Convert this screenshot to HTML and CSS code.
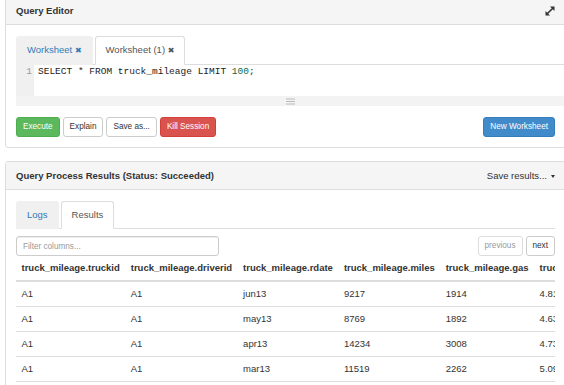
FILE: index.html
```html
<!DOCTYPE html>
<html lang="en">
<head>
    <meta charset="UTF-8">
    <meta name="viewport" content="width=device-width, initial-scale=1.0">
    <title>Query Editor</title>
    <link rel="stylesheet" href="styles.css">
</head>
<body>
    <div class="page">
        <!-- Query editor panel -->
        <div class="panel editor-panel">
            <div class="panel-heading">
                <span class="panel-title">Query Editor</span>
                <svg class="expand" width="10" height="10" viewBox="0 0 10 10">
                    <line x1="2.2" y1="7.8" x2="7.8" y2="2.2" stroke="#333" stroke-width="1.6"/>
                    <polygon points="5,0.5 9.5,0.5 9.5,5" fill="#333"/>
                    <polygon points="0.5,5 0.5,9.5 5,9.5" fill="#333"/>
                </svg>
            </div>
            <div class="panel-body">
                <ul class="nav-tabs wide">
                    <li class="tab"><a>Worksheet <span class="close">✖</span></a></li>
                    <li class="tab active"><a>Worksheet (1) <span class="close">✖</span></a></li>
                </ul>
                <div class="editor wide">
                    <div class="code-area">
                        <div class="gutter">1</div>
                        <div class="code">SELECT * FROM truck_mileage LIMIT <span class="num">100</span>;</div>
                    </div>
                    <div class="resize-bar">
                        <svg width="9" height="7" viewBox="0 0 9 7">
                            <rect x="0" y="0.5" width="9" height="1" fill="#bbb"/>
                            <rect x="0" y="3" width="9" height="1" fill="#bbb"/>
                            <rect x="0" y="5.5" width="9" height="1" fill="#bbb"/>
                        </svg>
                    </div>
                </div>
                <div class="actions">
                    <div class="btn-row">
                        <button class="btn btn-success">Execute</button>
                        <button class="btn">Explain</button>
                        <button class="btn">Save as...</button>
                        <button class="btn btn-danger">Kill Session</button>
                    </div>
                    <button class="btn btn-primary">New Worksheet</button>
                </div>
            </div>
        </div>

        <!-- Results panel -->
        <div class="panel results-panel">
            <div class="panel-heading">
                <span class="panel-title">Query Process Results (Status: Succeeded)</span>
                <span class="save-results">Save results... <span class="caret"></span></span>
            </div>
            <div class="panel-body">
                <ul class="nav-tabs">
                    <li class="tab"><a>Logs</a></li>
                    <li class="tab active"><a>Results</a></li>
                </ul>
                <div class="toolbar">
                    <input class="filter" type="text" placeholder="Filter columns...">
                    <div class="pager">
                        <button class="btn" disabled>previous</button>
                        <button class="btn">next</button>
                    </div>
                </div>
                <div class="table-wrap">
                    <table class="results">
                        <thead>
                            <tr>
                                <th>truck_mileage.truckid</th>
                                <th>truck_mileage.driverid</th>
                                <th>truck_mileage.rdate</th>
                                <th>truck_mileage.miles</th>
                                <th>truck_mileage.gas</th>
                                <th>truck_mileage.mpg</th>
                            </tr>
                        </thead>
                        <tbody>
                            <tr><td>A1</td><td>A1</td><td>jun13</td><td>9217</td><td>1914</td><td>4.815569487983281</td></tr>
                            <tr><td>A1</td><td>A1</td><td>may13</td><td>8769</td><td>1892</td><td>4.634778012684989</td></tr>
                            <tr><td>A1</td><td>A1</td><td>apr13</td><td>14234</td><td>3008</td><td>4.732047872340425</td></tr>
                            <tr><td>A1</td><td>A1</td><td>mar13</td><td>11519</td><td>2262</td><td>5.092396109637489</td></tr>
                            <tr><td>A1</td><td>A1</td><td>feb13</td><td>8676</td><td>1596</td><td>5.43609022556391</td></tr>
                        </tbody>
                    </table>
                </div>
            </div>
        </div>
    </div>
</body>
</html>
```

FILE: styles.css
```css
* {
    margin: 0;
    padding: 0;
    box-sizing: border-box;
}

body {
    font-family: 'Liberation Sans', Arial, sans-serif;
    font-size: 9.5px;
    line-height: 14px;
    color: #333;
    background: #fff;
    padding-left: 5px;
    overflow: hidden;
}

.page {
    width: 561px;
}

.panel {
    border: 1px solid #ddd;
    border-radius: 3px;
    background: #fff;
}

.editor-panel {
    margin-top: -4px;
}

.results-panel {
    margin-top: 13px;
}

.panel-heading {
    display: flex;
    justify-content: space-between;
    align-items: center;
    padding: 7px 10px 6px;
    background: #f5f5f5;
    border-bottom: 1px solid #ddd;
}

.panel-title {
    font-weight: bold;
}

.expand {
    display: block;
}

.panel-body {
    padding: 11px 10px 10px;
}

/* tabs */
.nav-tabs {
    list-style: none;
    display: flex;
    border-bottom: 1px solid #ddd;
}

.wide {
    margin-right: -9px;
}

.tab {
    margin-bottom: -1px;
    margin-right: 2px;
}

.tab a {
    display: block;
    padding: 6px 10px;
    border: 1px solid transparent;
    border-radius: 3px 3px 0 0;
    background: #f0f0f0;
    color: #337ab7;
}

.tab.active a {
    background: #fff;
    color: #555;
    border-color: #ddd #ddd transparent;
}

.close {
    font-family: 'DejaVu Sans', sans-serif;
    font-size: 8px;
}

/* editor */
.code-area {
    display: flex;
    height: 31px;
}

.gutter {
    width: 18px;
    background: #f0f0f0;
    color: #999;
    text-align: right;
    padding-right: 2px;
    font-family: 'Liberation Mono', monospace;
}

.code {
    padding-left: 4px;
    font-family: 'Liberation Mono', monospace;
    color: #222;
    white-space: pre;
}

.num {
    color: #164;
}

.resize-bar {
    height: 10px;
    background: #f3f3f3;
    display: flex;
    justify-content: center;
    align-items: center;
}

.resize-bar svg {
    display: block;
}

/* buttons */
.actions {
    display: flex;
    justify-content: space-between;
    margin-top: 11px;
}

.btn-row {
    display: flex;
    gap: 3px;
}

.btn {
    height: 20px;
    padding: 0 6px;
    font-family: inherit;
    font-size: 8.2px;
    line-height: 18px;
    border: 1px solid #ccc;
    border-radius: 3px;
    background: #fff;
    color: #333;
}

.btn-success {
    background: #5cb85c;
    border-color: #4cae4c;
    color: #fff;
}

.btn-danger {
    background: #d9534f;
    border-color: #d43f3a;
    color: #fff;
}

.btn-primary {
    background: #428bca;
    border-color: #357ebd;
    color: #fff;
}

.btn:disabled {
    color: #999;
    border-color: #ddd;
}

/* results */
.save-results {
    display: flex;
    align-items: center;
    gap: 4px;
}

.caret {
    width: 0;
    height: 0;
    border-left: 2.5px solid transparent;
    border-right: 2.5px solid transparent;
    border-top: 3px solid #333;
}

.toolbar {
    display: flex;
    justify-content: space-between;
    margin-top: 7px;
}

.filter {
    width: 203px;
    height: 20px;
    padding: 0 6px;
    border: 1px solid #ccc;
    border-radius: 3px;
    font-family: inherit;
    font-size: 8.2px;
    box-shadow: inset 0 1px 1px rgba(0, 0, 0, 0.075);
}

.filter::placeholder {
    color: #999;
}

.pager {
    display: flex;
    gap: 3px;
}

.table-wrap {
    overflow: hidden;
}

.results {
    border-collapse: collapse;
    white-space: nowrap;
}

.results th {
    text-align: left;
    padding: 5px 5.5px;
    border-bottom: 2px solid #ddd;
}

.results td {
    padding: 5px 5.5px;
    border-top: 1px solid #ddd;
}
```
